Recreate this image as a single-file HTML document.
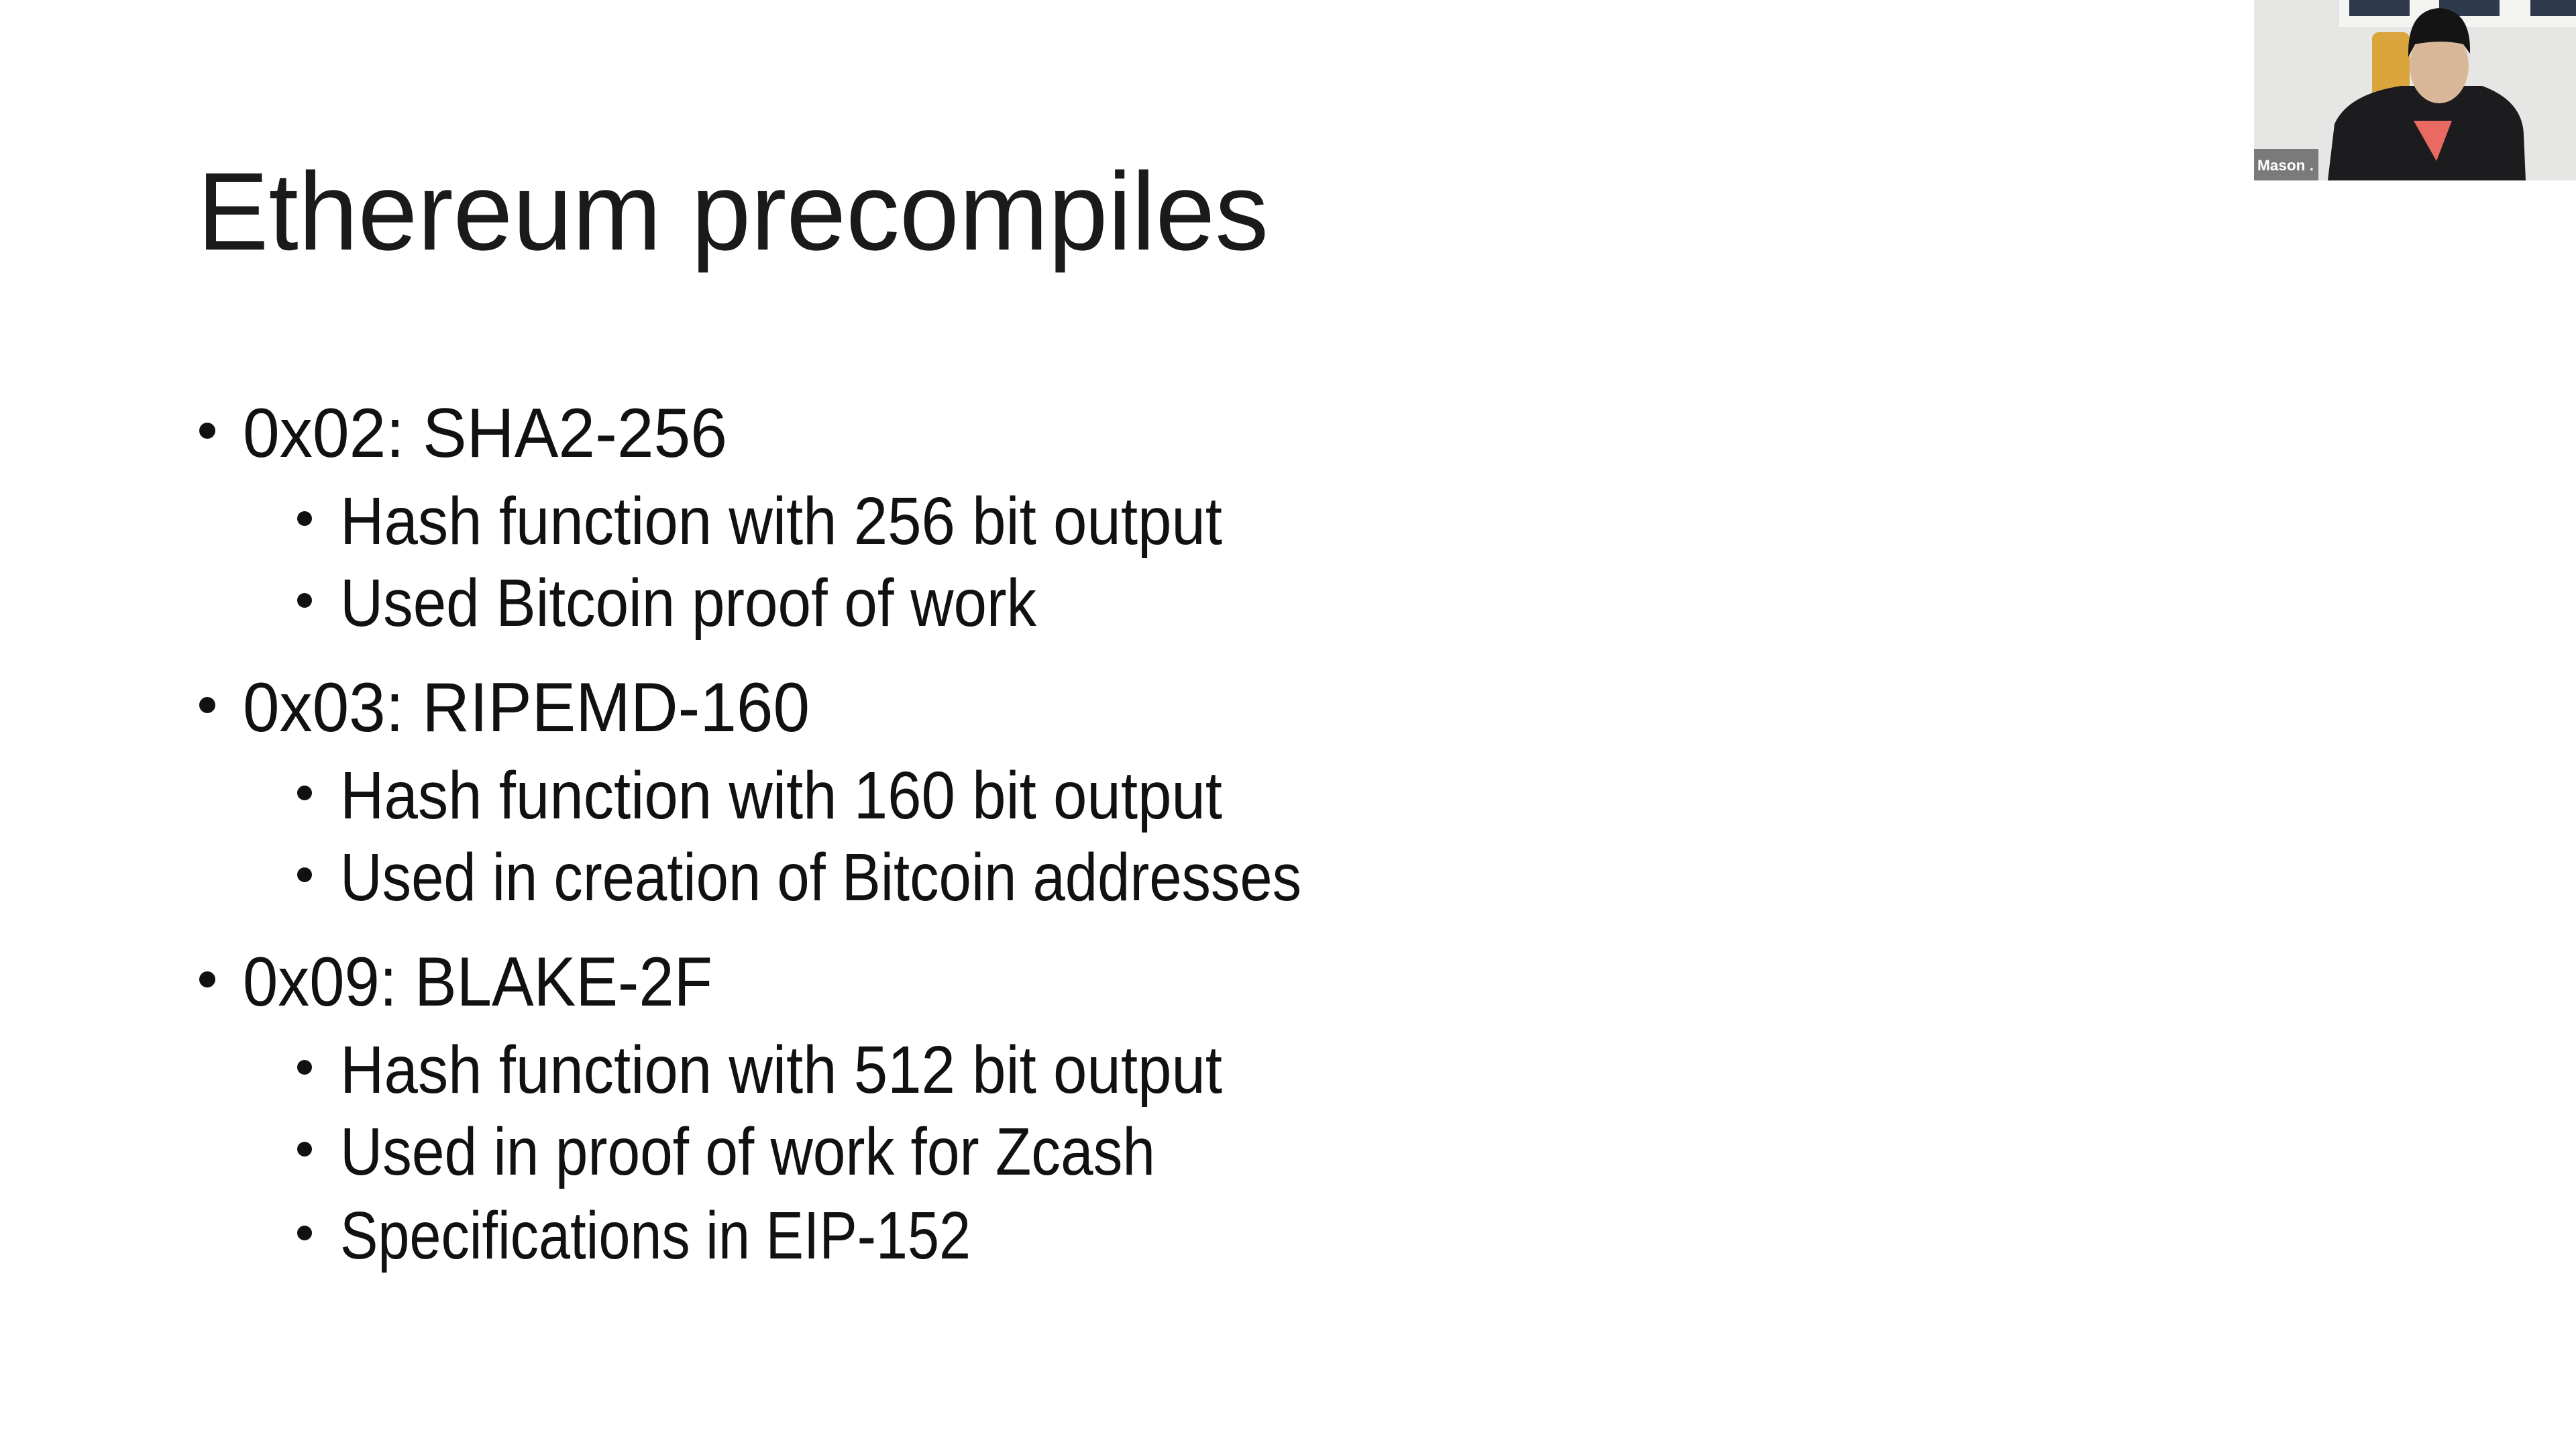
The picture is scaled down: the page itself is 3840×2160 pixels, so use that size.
<!DOCTYPE html>
<html><head><meta charset="utf-8"><style>
html,body{margin:0;padding:0;background:#fff;width:3840px;height:2160px;overflow:hidden}
svg{display:block}
text{font-family:"Liberation Sans",sans-serif;fill:#111}
</style></head><body>
<svg width="3840" height="2160" viewBox="0 0 3840 2160">
<rect width="3840" height="2160" fill="#fff"/>
<text x="294" y="372" font-size="165" textLength="1597" lengthAdjust="spacingAndGlyphs" style="fill:#1a1a1a">Ethereum precompiles</text>
<g>
<circle cx="309" cy="642" r="12" fill="#111"/>
<text x="362" y="681" font-size="104" textLength="722" lengthAdjust="spacingAndGlyphs">0x02: SHA2-256</text>
<circle cx="454" cy="773" r="11" fill="#111"/>
<text x="507" y="811" font-size="100" textLength="1315" lengthAdjust="spacingAndGlyphs">Hash function with 256 bit output</text>
<circle cx="454" cy="895" r="11" fill="#111"/>
<text x="507" y="933" font-size="100" textLength="1038" lengthAdjust="spacingAndGlyphs">Used Bitcoin proof of work</text>

<circle cx="309" cy="1051" r="12" fill="#111"/>
<text x="362" y="1090" font-size="104" textLength="845" lengthAdjust="spacingAndGlyphs">0x03: RIPEMD-160</text>
<circle cx="454" cy="1182" r="11" fill="#111"/>
<text x="507" y="1220" font-size="100" textLength="1315" lengthAdjust="spacingAndGlyphs">Hash function with 160 bit output</text>
<circle cx="454" cy="1304" r="11" fill="#111"/>
<text x="507" y="1342" font-size="100" textLength="1433" lengthAdjust="spacingAndGlyphs">Used in creation of Bitcoin addresses</text>

<circle cx="309" cy="1460" r="12" fill="#111"/>
<text x="362" y="1499" font-size="104" textLength="700" lengthAdjust="spacingAndGlyphs">0x09: BLAKE-2F</text>
<circle cx="454" cy="1591" r="11" fill="#111"/>
<text x="507" y="1629" font-size="100" textLength="1315" lengthAdjust="spacingAndGlyphs">Hash function with 512 bit output</text>
<circle cx="454" cy="1713" r="11" fill="#111"/>
<text x="507" y="1751" font-size="100" textLength="1215" lengthAdjust="spacingAndGlyphs">Used in proof of work for Zcash</text>
<circle cx="454" cy="1838" r="11" fill="#111"/>
<text x="507" y="1876" font-size="100" textLength="940" lengthAdjust="spacingAndGlyphs">Specifications in EIP-152</text>
</g>
<g>
<rect x="3360" y="0" width="480" height="269" fill="#e6e6e4"/>
<rect x="3487" y="0" width="353" height="40" fill="#f4f4f2"/>
<rect x="3502" y="0" width="90" height="24" fill="#2f3a4c"/>
<rect x="3636" y="0" width="90" height="24" fill="#2f3a4c"/>
<rect x="3772" y="0" width="68" height="24" fill="#2f3a4c"/>
<rect x="3536" y="48" width="56" height="112" rx="10" fill="#d9a53c"/>
<path d="M3470 269 L3480 185 Q3500 140 3580 128 L3700 128 Q3760 150 3762 200 L3765 269 Z" fill="#1c1c1e"/>
<path d="M3598 180 L3655 180 L3632 240 Z" fill="#e86a62"/>
<ellipse cx="3636" cy="98" rx="44" ry="56" fill="#d9b89a"/>
<path d="M3590 85 Q3588 15 3636 12 Q3684 15 3682 80 L3672 66 Q3640 58 3600 66 Z" fill="#141414"/>
<rect x="3360" y="222" width="96" height="47" fill="#7a7a7a"/>
<text x="3365" y="254" font-size="22" font-weight="bold" textLength="84" lengthAdjust="spacingAndGlyphs" style="fill:#fff">Mason .</text>
</g>
</svg>
</body></html>
